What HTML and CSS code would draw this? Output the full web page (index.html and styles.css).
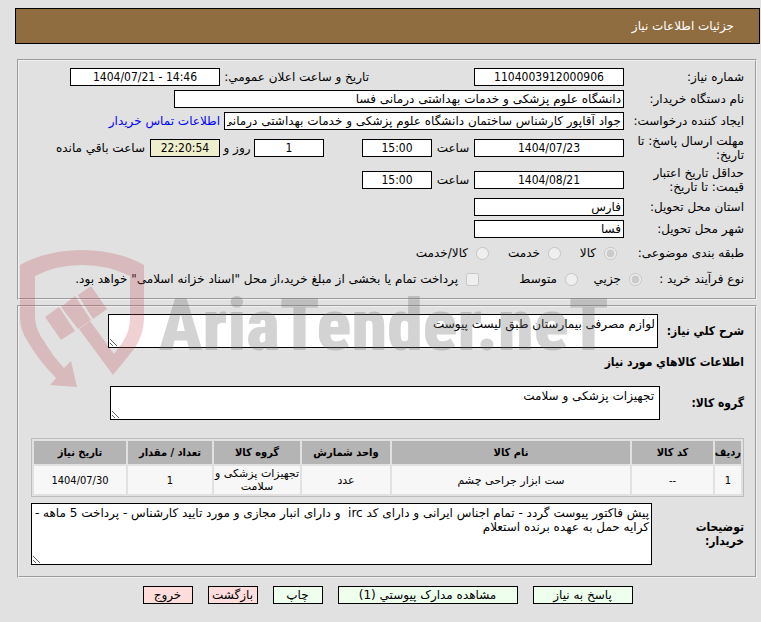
FILE: index.html
```html
<!DOCTYPE html>
<html lang="fa" dir="rtl">
<head>
<meta charset="UTF-8">
<meta name="viewport" content="width=device-width, initial-scale=1.0">
<title>جزئیات اطلاعات نیاز</title>
<link rel="stylesheet" href="styles.css">
</head>
<body>
<header class="page-title">جزئیات اطلاعات نیاز</header>

<main>
    <fieldset class="panel">
        <div class="row">
            <label class="caption" for="need-no">شماره نیاز:</label>
            <input class="field center w-date" id="need-no" type="text" value="1104003912000906" readonly>
            <label class="announce" for="announce-date">تاریخ و ساعت اعلان عمومي:</label>
            <input class="field center w-date" id="announce-date" type="text" value="1404/07/21 - 14:46" dir="ltr" readonly>
        </div>
        <div class="row">
            <label class="caption" for="buyer-org">نام دستگاه خریدار:</label>
            <input class="field w-org" id="buyer-org" type="text" value="دانشگاه علوم پزشکی و خدمات بهداشتی درمانی فسا" readonly>
        </div>
        <div class="row">
            <label class="caption" for="creator">ایجاد کننده درخواست:</label>
            <input class="field w-creator" id="creator" type="text" value="جواد آقاپور کارشناس ساختمان دانشگاه علوم پزشکی و خدمات بهداشتی درمانی فسا" readonly>
            <a class="contact" href="#">اطلاعات تماس خریدار</a>
        </div>
        <div class="row tall">
            <label class="caption" for="reply-date">مهلت ارسال پاسخ: تا<br>تاریخ:</label>
            <input class="field center w-date" id="reply-date" type="text" value="1404/07/23" readonly>
            <label class="unit" for="reply-time">ساعت</label>
            <input class="field center w-time" id="reply-time" type="text" value="15:00" readonly>
            <input class="field center w-time days" id="days-left" type="text" value="1" readonly>
            <label class="unit-day" for="days-left">روز و</label>
            <input class="field center w-time timer" id="time-left" type="text" value="22:20:54" readonly>
            <label class="after" for="time-left">ساعت باقي مانده</label>
        </div>
        <div class="row tall">
            <label class="caption" for="price-date">حداقل تاریخ اعتبار<br>قیمت: تا تاریخ:</label>
            <input class="field center w-date" id="price-date" type="text" value="1404/08/21" readonly>
            <label class="unit" for="price-time">ساعت</label>
            <input class="field center w-time" id="price-time" type="text" value="15:00" readonly>
        </div>
        <div class="row">
            <label class="caption" for="province">استان محل تحویل:</label>
            <input class="field w-date" id="province" type="text" value="فارس" readonly>
        </div>
        <div class="row">
            <label class="caption" for="city">شهر محل تحویل:</label>
            <input class="field w-date" id="city" type="text" value="فسا" readonly>
        </div>
        <div class="row options subject">
            <span class="caption">طبقه بندی موضوعی:</span>
            <label><input type="radio" name="subject" checked disabled>کالا</label>
            <label><input type="radio" name="subject" disabled>خدمت</label>
            <label><input type="radio" name="subject" disabled>کالا/خدمت</label>
        </div>
        <div class="row options process">
            <span class="caption">نوع فرآیند خرید :</span>
            <label><input type="radio" name="process" checked disabled>جزیي</label>
            <label><input type="radio" name="process" disabled>متوسط</label>
            <label><input type="checkbox" disabled>پرداخت تمام یا بخشی از مبلغ خرید،از محل "اسناد خزانه اسلامی" خواهد بود.</label>
        </div>
    </fieldset>

    <fieldset class="panel details">
        <div class="area-row">
            <label class="strong" for="summary">شرح کلي نیاز:</label>
            <textarea class="area" id="summary" readonly>لوازم مصرفی بیمارستان طبق لیست پیوست</textarea>
        </div>
        <h2 class="strong">اطلاعات کالاهاي مورد نیاز</h2>
        <div class="area-row group">
            <label class="strong" for="goods-group">گروه کالا:</label>
            <textarea class="area" id="goods-group" readonly>تجهیزات پزشکی و سلامت</textarea>
        </div>
        <table class="goods">
            <colgroup>
                <col class="c-row"><col class="c-code"><col><col class="c-unit"><col class="c-group"><col class="c-count"><col class="c-date">
            </colgroup>
            <thead>
                <tr>
                    <th>ردیف</th>
                    <th>کد کالا</th>
                    <th>نام کالا</th>
                    <th>واحد شمارش</th>
                    <th>گروه کالا</th>
                    <th>تعداد / مقدار</th>
                    <th>تاریخ نیاز</th>
                </tr>
            </thead>
            <tbody>
                <tr>
                    <td class="num">1</td>
                    <td class="num">--</td>
                    <td>ست ابزار جراحی چشم</td>
                    <td>عدد</td>
                    <td>تجهیزات پزشکی و سلامت</td>
                    <td class="num">1</td>
                    <td class="num">1404/07/30</td>
                </tr>
            </tbody>
        </table>
        <div class="area-row notes">
            <label class="strong" for="notes">توضیحات<br>خریدار:</label>
            <textarea class="area" id="notes" readonly>پیش فاکتور پیوست گردد - تمام اجناس ایرانی و دارای کد irc  و دارای انبار مجازی و مورد تایید کارشناس - پرداخت 5 ماهه - کرایه حمل به عهده برنده استعلام</textarea>
        </div>
    </fieldset>

    <div class="buttons">
        <button class="btn w-reply" type="button">پاسخ به نیاز</button>
        <button class="btn w-docs" type="button">مشاهده مدارک پیوستي (1)</button>
        <button class="btn" type="button">چاپ</button>
        <button class="btn back" type="button">بازگشت</button>
        <button class="btn back" type="button">خروج</button>
    </div>
</main>

<div class="watermark" dir="ltr">
    <svg class="shield" width="126" height="140" viewBox="19 249 126 140" aria-hidden="true">
        <path d="M20 265Q47 250 82 250Q117 250 144 265V318Q144 335 134 349L113 375L79 329L90 321L114 354L122 343Q130 332 130 318V276Q108 265 82 265Q56 265 35 276V318Q36 331 44 341Q52 355 64 368L71 361L77 387L50 385L56 378Q39 361 28 342Q20 330 20 318Z"/>
        <path d="M45 317L59 307L75 331L61 340ZM61 307L75 296L91 320L78 329ZM78 295L91 286L107 309L93 319Z"/>
    </svg>
    <span class="brand">AriaTender.neT</span>
</div>
</body>
</html>
```
FILE: styles.css
```css
* {
    box-sizing: border-box;
}
body {
    margin: 0;
    padding: 8px 1px 0 15px;
    position: relative;
    background: #e1e1e1;
    color: #000;
    font-family: 'DejaVu Sans', sans-serif;
    font-size: 12px;
    line-height: 14px;
}
input, textarea, button {
    font-family: inherit;
    font-size: 12px;
    color: #000;
}
.page-title {
    background: #8f6d40;
    border: 1px solid #000;
    color: #fff;
    padding: 10px 25px;
}
.panel {
    margin: 15px 3px 0 2px;
    padding: 5px 11px 6px 12px;
    border: 2px groove #f0f0f0;
    min-width: 0;
}
.row {
    display: flex;
    align-items: center;
    height: 22px;
    white-space: nowrap;
}
.row.tall {
    height: 32px;
}
.caption {
    flex: 0 0 120px;
}
.field {
    flex: none;
    height: 18px;
    padding: 0 2px;
    border: 1px solid #000;
    background: #fff;
}
.center {
    font-family: 'DejaVu Sans Condensed', 'DejaVu Sans', sans-serif;
    text-align: center;
}
.w-date {
    width: 150px;
}
.w-time {
    width: 70px;
}
.w-org {
    width: 450px;
}
.w-creator {
    width: 400px;
}
.announce {
    width: 149px;
    margin-right: 105px;
}
.contact {
    margin-right: 4px;
    color: #00f;
    text-decoration: none;
}
.unit {
    width: 42px;
    text-align: center;
}
.unit-day {
    width: 34px;
    text-align: center;
}
.days {
    margin-right: 38px;
}
.timer {
    background: #eeeecc;
}
.after {
    margin-right: 5px;
}
.options {
    display: grid;
    height: 26px;
}
.subject {
    grid-template-columns: 127px 56px 72px 1fr;
}
.process {
    grid-template-columns: 102px 64px 99px 1fr;
}
.options label {
    display: flex;
    align-items: center;
    gap: 8px;
}
.options input {
    flex: none;
    width: 13px;
    height: 13px;
    margin: 0;
}
.details {
    margin-top: 5px;
    padding-top: 7px;
    padding-bottom: 11px;
}
.strong {
    margin: 0;
    font-family: 'DejaVu Sans Condensed', 'DejaVu Sans', sans-serif;
    font-size: 12px;
    font-weight: bold;
    line-height: 14px;
}
.area-row {
    display: flex;
    align-items: center;
}
.area-row .strong {
    flex: 0 0 86px;
}
.area {
    display: block;
    width: 550px;
    height: 34px;
    padding: 2px;
    border: 1px solid #000;
    background: #fff;
    line-height: 14px;
}
.details h2 {
    padding: 7px 0 17px;
}
.group .strong {
    flex-basis: 84px;
}
.group .area {
    padding-right: 5px;
}
.goods {
    width: 100%;
    margin: 18px 0 6px;
    table-layout: fixed;
    border: 1px solid #bdbdbd;
    border-spacing: 2px;
    font-size: 11px;
    line-height: 13px;
    text-align: center;
}
.goods th, .goods td {
    padding: 1px 0;
}
.goods th {
    height: 23px;
    background: #b4b4b4;
}
.goods td {
    height: 28px;
    background: #f7f7f7;
}
.goods th, .goods .num {
    font-family: 'DejaVu Sans Condensed', 'DejaVu Sans', sans-serif;
}
.c-row {
    width: 26px;
}
.c-code {
    width: 81px;
}
.c-unit {
    width: 88px;
}
.c-group {
    width: 86px;
}
.c-count {
    width: 84px;
}
.c-date {
    width: 92px;
}
.notes .strong {
    flex-basis: 92px;
}
.notes .area {
    flex: 1;
    height: 62px;
}
.buttons {
    display: flex;
    justify-content: center;
    gap: 15px;
    padding-top: 8px;
}
.btn {
    width: 50px;
    height: 18px;
    padding: 0;
    border: 1px solid #000;
    background: #eeffee;
    line-height: 14px;
    cursor: pointer;
}
.w-reply {
    width: 100px;
}
.w-docs {
    width: 180px;
}
.back {
    background: #ffdddd;
}
/* logo stamped over the form */
.watermark {
    position: absolute;
    top: 249px;
    left: 19px;
    display: flex;
    gap: 14px;
    pointer-events: none;
}
.shield {
    fill: rgba(195, 70, 80, 0.25);
}
.brand {
    padding-top: 37px;
    color: rgba(110, 110, 110, 0.3);
    font-family: 'Roboto Condensed', 'Open Sans Condensed', 'Roboto', sans-serif;
    font-size: 72px;
    font-weight: 900;
    line-height: 80px;
}
```
